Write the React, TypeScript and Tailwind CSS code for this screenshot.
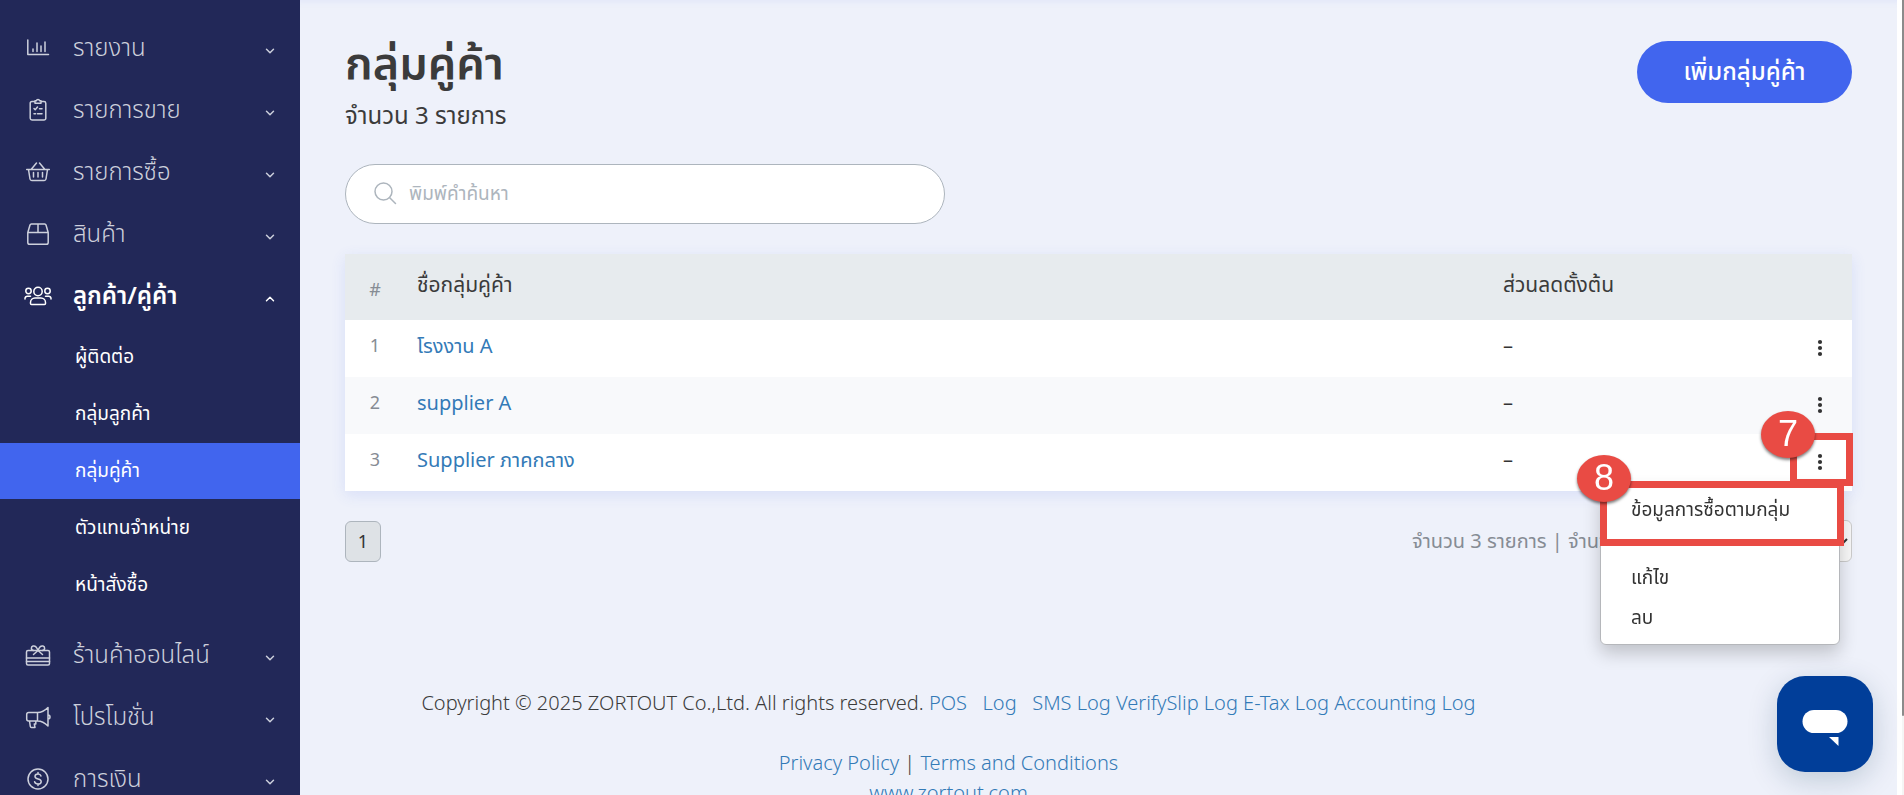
import type { ReactNode } from 'react';
import { clsx } from 'clsx';
import { ChevronDown, ChevronUp } from 'lucide-react';

const iconProps = {
  width: 28,
  height: 28,
  viewBox: '0 0 28 28',
  fill: 'none',
  stroke: 'currentColor',
  strokeWidth: 1.5,
  strokeLinecap: 'round' as const,
  strokeLinejoin: 'round' as const,
  'aria-hidden': true,
};

function ChartIcon() {
  return (
    <svg {...iconProps}>
      <path d="M3.800 6v14.600H24.500M9 17.500v-2.500M13 17.500V9M17 17.500v-5.500M21 17.500V8" />
    </svg>
  );
}

function ClipboardIcon() {
  return (
    <svg {...iconProps}>
      <path d="M11 5.500H8a1.800 1.800 0 0 0-1.800 1.800v15A1.800 1.800 0 0 0 8 24h12a1.800 1.800 0 0 0 1.800-1.800v-15A1.800 1.800 0 0 0 20 5.500h-3M11 4.800h1.300a1.800 1.800 0 0 1 3.400 0H17v2.500h-6zM10 12.500l1.200 1.200 2.300-2.700M15.500 12.800H18M10 17.800h1.500M13.500 17.800H18" />
    </svg>
  );
}

function BasketIcon() {
  return (
    <svg {...iconProps}>
      <path d="M2.700 11.500h22.600M4.500 11.500l1.500 9.500a1.800 1.800 0 0 0 1.800 1.500h12.400a1.800 1.800 0 0 0 1.800-1.500L23.500 11.500M7.500 11l5-6M20.500 11l-5-6M9.500 14.500v4.500M14 14.500v4.500M18.500 14.500v4.500" />
    </svg>
  );
}

function BoxIcon() {
  return (
    <svg {...iconProps}>
      <path d="M3.800 12.500v10a1.800 1.800 0 0 0 1.800 1.800h16.800a1.800 1.800 0 0 0 1.800-1.800v-10M3.800 12.500h20.400M3.800 12.500L6 5a1.500 1.500 0 0 1 1.500-1h13a1.500 1.500 0 0 1 1.500 1l2.200 7.500M14 4v8.500" />
    </svg>
  );
}

function GroupIcon() {
  return (
    <svg {...iconProps}>
      <circle cx="14" cy="9.500" r="4.200" />
      <circle cx="4.500" cy="9" r="2.700" />
      <circle cx="23.500" cy="9" r="2.700" />
      <path d="M6.500 21.500v-1a4.500 4.500 0 0 1 4.500-4.500h6a4.500 4.500 0 0 1 4.500 4.500v1a1 1 0 0 1-1 1h-13a1 1 0 0 1-1-1zM1 17v-.5a2.300 2.300 0 0 1 2.300-2.300H6.500M27 17v-.5a2.300 2.300 0 0 0-2.300-2.300H21.500" />
    </svg>
  );
}

function GiftIcon() {
  return (
    <svg {...iconProps}>
      <rect x="2.500" y="9.500" width="23" height="14.500" rx="1.500" />
      <path d="M2.500 17h23M2.500 20.500h23M14 9.500c-1-3-3-5-5-4.500s-2.500 4 .5 4.500M14 9.500c1-3 3-5 5-4.500s2.500 4-.5 4.500M14 9.500l-4.500 4M14 9.500l4.500 4" />
    </svg>
  );
}

function MegaphoneIcon() {
  return (
    <svg {...iconProps}>
      <path d="M13.500 9.500H4.700a2 2 0 0 0-2 2v4.500a2 2 0 0 0 2 2h8.800zM13.500 9.500c4 0 7.500-2 10.500-5v18.500c-3-3-6.500-5-10.500-5M24 12a2 2 0 0 1 0 4M5.500 18l.8 5.500a1.200 1.200 0 0 0 1.200 1h3.500l-.7-3.500h1.500V18" />
    </svg>
  );
}

function MoneyIcon() {
  return (
    <svg {...iconProps}>
      <circle cx="14" cy="14" r="10" />
      <path d="M17 11c-.4-1.300-1.600-2-3-2-1.700 0-3 .9-3 2.400 0 3.400 6.200 1.700 6.200 5 0 1.600-1.500 2.600-3.200 2.600s-3-.8-3.400-2.200M14 7.500V9M14 19v1.500" />
    </svg>
  );
}

function SearchIcon() {
  return (
    <svg width="24" height="24" viewBox="0 0 24 24" fill="none" stroke="currentColor" strokeWidth="1.500" aria-hidden>
      <circle cx="10.500" cy="9.500" r="8.500" />
      <path d="M16.500 15.500l6 6" strokeLinecap="round" />
    </svg>
  );
}

function DotsIcon() {
  return (
    <svg width="6" height="18" viewBox="0 0 6 18" fill="currentColor" aria-hidden>
      <circle cx="3" cy="3" r="2.100" />
      <circle cx="3" cy="9" r="2.100" />
      <circle cx="3" cy="15" r="2.100" />
    </svg>
  );
}

interface NavItemProps {
  icon: ReactNode;
  label: string;
  open?: boolean;
}

function NavItem({ icon, label, open = false }: NavItemProps) {
  const Chevron = open ? ChevronUp : ChevronDown;
  return (
    <button
      type="button"
      aria-expanded={open}
      className={clsx(
        'flex h-[62px] w-full shrink-0 items-center pb-0.5 pl-6 pr-[23px] text-left text-2xl',
        open ? 'font-semibold text-white' : 'font-light text-[#cdd0dc]',
      )}
    >
      {icon}
      <span className="ml-[21px] flex-1 pb-0.5 whitespace-nowrap">{label}</span>
      <Chevron size={14} strokeWidth={2.5} className="mt-1.5" />
    </button>
  );
}

const topItems = [
  { label: 'รายงาน', icon: <ChartIcon /> },
  { label: 'รายการขาย', icon: <ClipboardIcon /> },
  { label: 'รายการซื้อ', icon: <BasketIcon /> },
  { label: 'สินค้า', icon: <BoxIcon /> },
];

const bottomItems = [
  { label: 'ร้านค้าออนไลน์', icon: <GiftIcon /> },
  { label: 'โปรโมชั่น', icon: <MegaphoneIcon /> },
  { label: 'การเงิน', icon: <MoneyIcon /> },
];

const subItems = ['ผู้ติดต่อ', 'กลุ่มลูกค้า', 'กลุ่มคู่ค้า', 'ตัวแทนจำหน่าย', 'หน้าสั่งซื้อ'];
const activeItem = 'กลุ่มคู่ค้า';

function Sidebar() {
  return (
    <nav className="flex w-[300px] shrink-0 flex-col overflow-hidden bg-[#222858] pt-[18px]">
      {topItems.map((item) => (
        <NavItem key={item.label} {...item} />
      ))}
      <NavItem label="ลูกค้า/คู่ค้า" icon={<GroupIcon />} open />
      <ul className="flex flex-col gap-px pt-px pb-3">
        {subItems.map((label) => (
          <li key={label}>
            <a
              href="#"
              className={clsx(
                'flex h-14 items-center pb-0.5 pl-[75px] text-[19px] text-white',
                label === activeItem && 'bg-[#4165ee]',
              )}
            >
              {label}
            </a>
          </li>
        ))}
      </ul>
      {bottomItems.map((item) => (
        <NavItem key={item.label} {...item} />
      ))}
    </nav>
  );
}

const groups = [
  { id: 1, name: 'โรงงาน A' },
  { id: 2, name: 'supplier A' },
  { id: 3, name: 'Supplier ภาคกลาง' },
];

function StepBadge({ children, className }: { children: ReactNode; className?: string }) {
  return (
    <span
      className={clsx(
        "absolute flex h-[47px] w-[54px] items-center justify-center rounded-[50%] bg-[#e94b44] pb-0.5 font-['Liberation_Sans',sans-serif] text-4xl text-white shadow-[0_2px_3px_rgba(0,0,0,0.5)]",
        className,
      )}
    >
      {children}
    </span>
  );
}

// Row menu, opened on the last row
function RowMenu() {
  return (
    <div className="absolute top-[50px] right-3 z-10 h-[161px] w-60 rounded-md border border-[#b5b7bb] bg-white pt-1 text-left text-[19px] text-[#333] shadow-[0_8px_18px_rgba(0,0,0,0.2)]">
      <a href="#" className="flex h-10 items-center px-[30px]">ข้อมูลการซื้อตามกลุ่ม</a>
      <a href="#" className="mt-7 flex h-10 items-center px-[30px]">แก้ไข</a>
      <a href="#" className="flex h-10 items-center px-[30px]">ลบ</a>
      <span className="absolute -top-[4px] -left-px h-[65px] w-[244px] border-[7px] border-[#e94b44]" />
      <StepBadge className="-top-[30px] -left-6">8</StepBadge>
    </div>
  );
}

function GroupTable() {
  return (
    <table className="mt-[30px] w-full table-fixed bg-white shadow-[0_4px_14px_rgba(65,101,238,0.12)]">
      <colgroup>
        <col className="w-[60px]" />
        <col />
        <col className="w-[284px]" />
        <col className="w-[77px]" />
      </colgroup>
      <thead className="bg-[#e7ebee]">
        <tr className="h-[66px] text-left text-[21px]">
          <th className="pt-1 text-center text-lg font-normal text-[#868c94]">#</th>
          <th className="px-3 pb-1 font-normal text-[#3b3b3b]">ชื่อกลุ่มคู่ค้า</th>
          <th className="px-3 pb-1 font-normal text-[#3b3b3b]">ส่วนลดตั้งต้น</th>
          <th />
        </tr>
      </thead>
      <tbody className="text-xl">
        {groups.map((group) => (
          <tr key={group.id} className="h-[57px] even:bg-[#f8f9fb]">
            <td className="pb-2 text-center text-lg text-[#868c94]">{group.id}</td>
            <td className="px-3 pb-1.5">
              <a href="#" className="text-[#337ab7]">{group.name}</a>
            </td>
            <td className="px-3 pb-1.5 text-[#333]">–</td>
            <td className="relative pb-0.5 pl-3">
              <button type="button" aria-label="เมนู" className="mx-auto flex h-10 w-10 items-center justify-center text-[#333]">
                <DotsIcon />
              </button>
              {group.id === 3 && (
                <>
                  <RowMenu />
                  <span className="absolute -top-px -right-px z-10 h-[53px] w-[63px] border-[7px] border-[#e94b44]" />
                  <StepBadge className="-top-[23px] right-[37px] z-20">7</StepBadge>
                </>
              )}
            </td>
          </tr>
        ))}
      </tbody>
    </table>
  );
}

function Footer() {
  return (
    <footer className="mt-[126px] mr-[255px] -ml-[45px] text-center text-xl leading-[30px] font-light text-[#3b3b3b] [&_a]:text-[#337ab7]">
      <p className="whitespace-pre">
        Copyright © 2025 ZORTOUT Co.,Ltd. All rights reserved. <a href="#">POS</a>{'   '}
        <a href="#">Log</a>{'   '}
        <a href="#">SMS Log</a> <a href="#">VerifySlip Log</a> <a href="#">E-Tax Log</a> <a href="#">Accounting Log</a>
      </p>
      <p className="mt-[30px]">
        <a href="#">Privacy Policy</a> | <a href="#">Terms and Conditions</a>
      </p>
      <p>
        <a href="#">www.zortout.com</a>
      </p>
    </footer>
  );
}

function ChatButton() {
  return (
    <button
      type="button"
      aria-label="แชท"
      className="fixed right-[31px] bottom-[23px] flex h-24 w-24 items-center justify-center rounded-[28px] bg-[#013e99] shadow-[0_8px_30px_rgba(0,50,80,0.2)]"
    >
      <svg width="46" height="38" viewBox="0 0 46 38" fill="white" className="mt-2" aria-hidden>
        <rect x="0.500" y="1" width="45" height="23" rx="11.500" />
        <path d="M27 28h9.500v9z" />
      </svg>
    </button>
  );
}

export default function App() {
  return (
    <div className="flex h-screen overflow-hidden bg-[#eef1fa] font-['Noto_Sans','Noto_Sans_Thai',sans-serif]">
      <Sidebar />
      <main className="min-w-0 flex-1 px-[45px] pt-[41px] shadow-[inset_0_8px_8px_-8px_rgba(65,101,238,0.1)]">
        <header className="flex items-start justify-between">
          <div className="text-[#3b3b3b]">
            <h1 className="text-[45px] leading-[42px] font-semibold">กลุ่มคู่ค้า</h1>
            <p className="mt-4 text-2xl leading-8">จำนวน 3 รายการ</p>
          </div>
          <button type="button" className="h-[62px] w-[215px] rounded-full bg-[#4165ee] pb-0.5 text-2xl font-medium text-white">
            เพิ่มกลุ่มคู่ค้า
          </button>
        </header>

        <label className="mt-[33px] flex h-[60px] w-[600px] items-center gap-3 rounded-full border border-[#adb5bd] bg-white px-[27px] text-[#adb5bd]">
          <SearchIcon />
          <input type="text" aria-label="ค้นหา" placeholder="พิมพ์คำค้นหา" className="flex-1 pb-0.5 text-[19px] outline-none placeholder:text-[#adb5bd]" />
        </label>

        <GroupTable />

        <div className="mt-[29px] flex items-center justify-between">
          <button type="button" className="h-[41px] w-9 rounded-md border border-[#adb5bd] bg-[#dee2e6] text-lg text-[#333]">1</button>
          <label className="flex items-center gap-2 text-xl text-[#868c94]">
            <span className="w-[323px] whitespace-nowrap">จำนวน 3 รายการ | จำนวนแสดง</span>
            <select className="h-[42px] w-[109px] rounded-md border border-[#ccc] bg-[#f8f8f8] px-3 text-lg text-[#333]">
              <option>20</option>
            </select>
          </label>
        </div>

        <Footer />
      </main>

      {/* Right gutter and scrollbar */}
      <div className="w-[5px] shrink-0 bg-white" />
      <div className="w-0.5 shrink-0 bg-[#f5f5f5]">
        <div className="h-[90%] rounded-b-full bg-[#8b8b8b]" />
      </div>
      <ChatButton />
    </div>
  );
}
